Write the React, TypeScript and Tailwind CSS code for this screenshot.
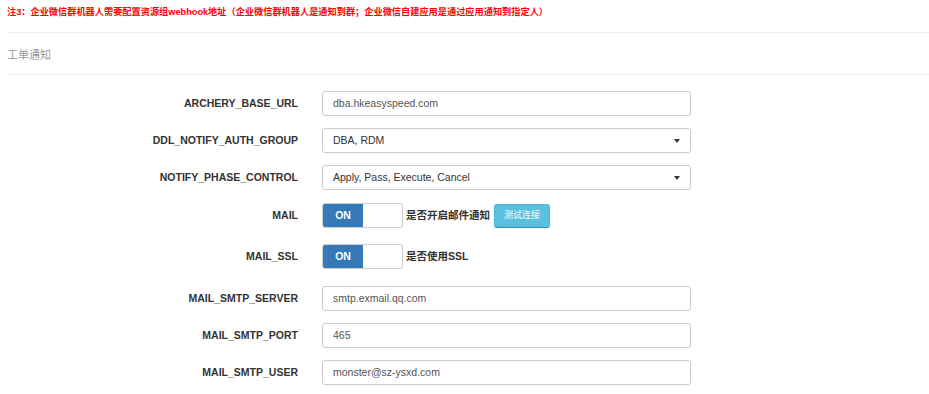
const font = "font-['Liberation_Sans','Noto_Sans_CJK_SC',sans-serif]";

function Label({ text }: { text: string }) {
  return (
    <div className="w-[298px] shrink-0 text-right text-[10.5px] font-bold text-[#333]">{text}</div>
  );
}

function TextRow({ label, value }: { label: string; value: string }) {
  return (
    <div className="flex items-center">
      <Label text={label} />
      <div className="ml-[24px] flex h-[25px] w-[369px] items-center rounded-[3px] border border-[#ccc] bg-white px-[10px] text-[10.5px] text-[#555]">
        {value}
      </div>
    </div>
  );
}

function SelectRow({ label, value }: { label: string; value: string }) {
  return (
    <div className="flex items-center">
      <Label text={label} />
      <div className="ml-[24px] flex h-[25px] w-[369px] items-center justify-between rounded-[3px] border border-[#ccc] bg-white pl-[10px] pr-[10px] text-[10.5px] text-[#333]">
        <span>{value}</span>
        <span className="h-0 w-0 border-x-[3px] border-t-[4px] border-x-transparent border-t-[#333]" />
      </div>
    </div>
  );
}

function ToggleRow({ label, note, extra }: { label: string; note: string; extra?: boolean }) {
  return (
    <div className="flex items-center">
      <Label text={label} />
      <div className="ml-[24px] flex h-[25px] w-[81px] overflow-hidden rounded-[3px] border border-[#ccc] bg-white">
        <div className="flex w-[40px] items-center justify-center bg-[#337ab7] text-[10.5px] font-bold text-white">ON</div>
        <div className="flex-1" />
      </div>
      <span className="ml-[3px] text-[10.5px] font-bold text-[#333]">{note}</span>
      {extra && (
        <button className="ml-[4px] h-[24px] w-[56px] rounded-[3px] border border-[#46b8da] border-b-[#2a8fb0] bg-[#5bc0de] text-[9px] text-white">
          测试连接
        </button>
      )}
    </div>
  );
}

export default function App() {
  return (
    <div className={`${font} h-[394px] w-[929px] overflow-hidden bg-white pl-[7px]`}>
      <p className="pt-[5px] text-[9.2px] font-bold leading-[14px] text-[#ff0000]">
        注3：企业微信群机器人需要配置资源组webhook地址（企业微信群机器人是通知到群；企业微信自建应用是通过应用通知到指定人）
      </p>
      <div className="mt-[13px] h-px bg-[#ececec]" />
      <div className="flex h-[41px] items-center pt-[3px] text-[11px] text-[#999]">工单通知</div>
      <div className="h-px bg-[#ececec]" />

      <div className="-ml-[7px] mt-[16px] flex flex-col gap-[12px]">
        <TextRow label="ARCHERY_BASE_URL" value="dba.hkeasyspeed.com" />
        <SelectRow label="DDL_NOTIFY_AUTH_GROUP" value="DBA, RDM" />
        <SelectRow label="NOTIFY_PHASE_CONTROL" value="Apply, Pass, Execute, Cancel" />
        <div className="mt-[1px]">
          <ToggleRow label="MAIL" note="是否开启邮件通知" extra />
        </div>
        <div className="mt-[4px]">
          <ToggleRow label="MAIL_SSL" note="是否使用SSL" />
        </div>
        <div className="mt-[5px]">
          <TextRow label="MAIL_SMTP_SERVER" value="smtp.exmail.qq.com" />
        </div>
        <TextRow label="MAIL_SMTP_PORT" value="465" />
        <TextRow label="MAIL_SMTP_USER" value="monster@sz-ysxd.com" />
      </div>
    </div>
  );
}
